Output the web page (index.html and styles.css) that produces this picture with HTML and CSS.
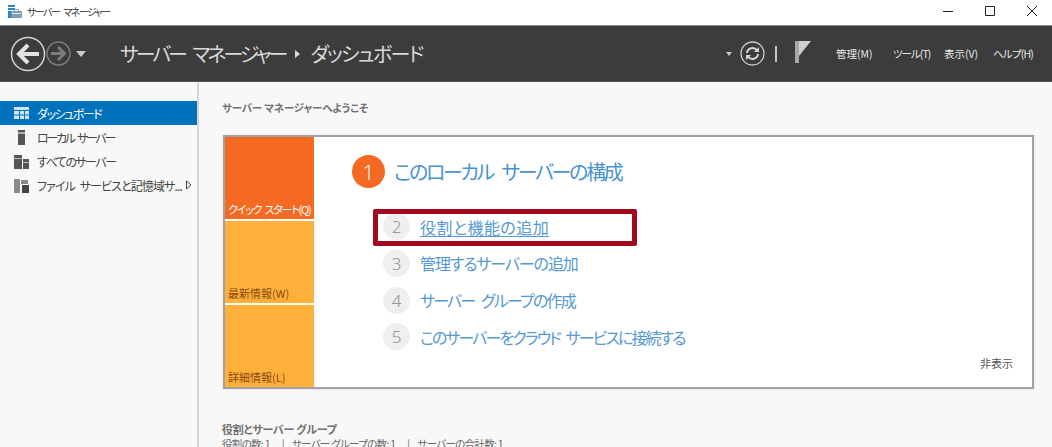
FILE: index.html
```html
<!DOCTYPE html>
<html lang="ja">
<head>
<meta charset="utf-8">
<title>サーバー マネージャー</title>
<link rel="stylesheet" href="styles.css">
</head>
<body>
<div class="app">
  <div class="titlebar">
    <svg class="app-icon" width="14" height="13" viewBox="0 0 14 13"><path fill="#2a86d0" d="M0 0h7v2H0zM0 3h7v2H0zM0 6h3v7H0z"/><path fill="#7f9db5" d="M3 6h11v7H3z"/><path fill="#dfe8ef" d="M4 8h9v1H4z"/><path fill="none" stroke="#7f9db5" d="M6.500 6V4.500h4V6"/></svg>
    <span class="app-name">サーバー マネージャー</span>
    <div class="win-buttons">
      <svg width="10" height="10" viewBox="0 0 10 10"><path stroke="#222" d="M0 5.500h10"/></svg>
      <svg width="10" height="10" viewBox="0 0 10 10"><path fill="none" stroke="#222" d="M.5.500h9v9h-9z"/></svg>
      <svg width="10" height="10" viewBox="0 0 10 10"><path stroke="#222" d="M0 0l10 10M10 0L0 10"/></svg>
    </div>
  </div>
  <header class="toolbar">
    <svg class="nav-back" width="36" height="36" viewBox="0 0 36 36"><circle cx="18" cy="18" r="16.5" fill="none" stroke="#d4d4d4" stroke-width="1.500"/><path fill="none" stroke="#e2e2e2" stroke-width="4" d="M29 18H10M18 9l-9 9 9 9"/></svg>
    <svg class="nav-forward" width="25" height="25" viewBox="0 0 25 25"><circle cx="12.5" cy="12.5" r="11.5" fill="none" stroke="#7c7c7c" stroke-width="1.500"/><path fill="none" stroke="#7c7c7c" stroke-width="3" d="M5 12.5h13M12 6l6.500 6.500L12 19"/></svg>
    <span class="caret"></span>
    <div class="crumbs"><span class="crumb-root">サーバー マネージャー</span><span class="crumb-sep"></span><span class="crumb-page">ダッシュボード</span></div>
    <span class="caret caret-small"></span>
    <svg class="refresh" width="25" height="25" viewBox="0 0 25 25"><circle cx="12.5" cy="12.5" r="11.5" fill="none" stroke="#d0d0d0" stroke-width="1.300"/><path fill="none" stroke="#d8d8d8" stroke-width="2" d="M7 12a5.500 5.500 0 0 1 10-2.500M18 13a5.500 5.500 0 0 1-10 2.500"/><path fill="#d8d8d8" d="M19 6v5h-5zM6 19v-5h5z"/></svg>
    <span class="divider"></span>
    <svg class="flag" width="16" height="22" viewBox="0 0 16 22"><path fill="#a8a8a8" d="M0 0h4v22H0z"/><path fill="#cfcfcf" d="M4 0h12L4 15z"/></svg>
    <nav class="menu"><span>管理(M)</span><span class="menu-tools">ツール(T)</span><span>表示(V)</span><span class="menu-help">ヘルプ(H)</span></nav>
  </header>
  <div class="body">
    <aside class="sidebar">
      <div class="nav-item active">
        <svg width="15" height="12" viewBox="0 0 15 12"><path fill="#cfe3f3" d="M0 0h15v12H0z"/><path fill="#0b72bd" d="M0 3h15v1H0zM0 7.500h15v1H0zM5 3h1v9H5zM10 3h1v9h-1z"/></svg>
        <span class="nav-dash">ダッシュボード</span>
      </div>
      <div class="nav-item">
        <svg width="15" height="16" viewBox="0 0 15 16"><path fill="#555" d="M4 1h7v15H4z"/><path fill="#aaa" d="M4 3h7v2H4z"/></svg>
        <span class="nav-local">ローカル サーバー</span>
      </div>
      <div class="nav-item">
        <svg width="15" height="15" viewBox="0 0 15 15"><path fill="#555" d="M0 1h8v14H0zM9 5h6v10H9z"/><path fill="#bbb" d="M0 4h8v1H0zM9 8h6v1H9z"/></svg>
        <span class="nav-all">すべてのサーバー</span>
      </div>
      <div class="nav-item">
        <svg width="15" height="15" viewBox="0 0 15 15"><path fill="#8a8a8a" d="M0 1h6v14H0zM7 2h7v4H7z"/><path fill="#444" d="M8 7h7v8H8z"/></svg>
        <span class="nav-files">ファイル サービスと記憶域サ...</span>
        <svg class="nav-arrow" width="6" height="10" viewBox="0 0 6 10"><path fill="none" stroke="#444" d="M.5 1v8L5 5z"/></svg>
      </div>
    </aside>
    <main class="content">
      <h2 class="welcome">サーバー マネージャーへようこそ</h2>
      <section class="card">
        <div class="tiles">
          <div class="tile tile-on">クイック スタート(Q)</div>
          <div class="tile">最新情報(W)</div>
          <div class="tile">詳細情報(L)</div>
        </div>
        <div class="steps">
          <div class="step-head"><span class="badge badge-on">1</span><span class="head-text">このローカル サーバーの構成</span></div>
          <div class="step first"><span class="badge">2</span><a class="step-link link-roles">役割と機能の追加</a></div>
          <div class="step"><span class="badge">3</span><a class="step-link link-manage">管理するサーバーの追加</a></div>
          <div class="step"><span class="badge">4</span><a class="step-link link-group">サーバー グループの作成</a></div>
          <div class="step"><span class="badge">5</span><a class="step-link link-cloud">このサーバーをクラウド サービスに接続する</a></div>
          <div class="hide">非表示</div>
        </div>
        <div class="highlight"></div>
      </section>
      <h3 class="roles">役割とサーバー グループ</h3>
      <p class="roles-sub"><span>役割の数: 1</span><i>|</i><span>サーバー グループの数: 1</span><i>|</i><span>サーバーの合計数: 1</span></p>
    </main>
  </div>
</div>
</body>
</html>
```
FILE: styles.css
```css
* { box-sizing: border-box; }
html, body { margin: 0; height: 100%; overflow: hidden; }
body { font-family: "Noto Sans CJK JP", "Noto Sans", sans-serif; font-feature-settings: "palt"; background: #f8f8f8; color: #555; }
.app { width: 1052px; height: 447px; display: flex; flex-direction: column; overflow: hidden; }

.titlebar { height: 25px; flex: none; background: #fff; display: flex; align-items: center; padding: 0 0 3px 8px; }
.app-icon { flex: none; margin-right: 5px; }
.app-name { font-size: 10px; color: #333; letter-spacing: -1.500px; word-spacing: 3px; }
.win-buttons { margin-left: auto; display: flex; gap: 32px; padding-right: 15px; }

.toolbar { height: 57px; flex: none; background: #3c3c3c; border-top: 1px solid #8a8a8a; border-bottom: 1px solid #555; display: flex; align-items: center; padding-left: 10px; color: #e0e0e0; }
.nav-back { flex: none; }
.nav-forward { flex: none; }
.caret { flex: none; width: 0; height: 0; border-left: 5px solid transparent; border-right: 5px solid transparent; border-top: 6px solid #ccc; margin-left: 5px; }
.caret-small { border-left-width: 3px; border-right-width: 3px; border-top-width: 4px; margin-left: 0; }
.crumbs { display: flex; align-items: center; margin-left: 34px; font-size: 20px; color: #d8d8d8; width: 606px; white-space: nowrap; }
.crumb-root { letter-spacing: -3px; word-spacing: 6px; }
.crumb-page { letter-spacing: -1.700px; }
.crumb-sep { width: 0; height: 0; margin: 0 10px 0 10px; border-top: 4px solid transparent; border-bottom: 4px solid transparent; border-left: 5px solid #ddd; }
.refresh { flex: none; margin-left: 8px; }
.divider { flex: none; width: 2px; height: 16px; background: #c4c4c4; margin-left: 10px; }
.flag { flex: none; margin: 0 0 3px 18px; }
.menu { display: flex; margin-left: 25px; font-size: 10.500px; color: #e8e8e8; white-space: nowrap; }
.menu span:nth-child(1) { width: 57px; }
.menu span:nth-child(2) { width: 51px; }
.menu span:nth-child(3) { width: 49px; }
.menu .menu-tools { letter-spacing: -1px; }
.menu .menu-help { letter-spacing: -.800px; }

.body { flex: 1; display: flex; min-height: 0; }
.sidebar { width: 199px; flex: none; border-right: 2px solid #d6d6d6; padding-top: 19px; background: #f8f8f8; }
.nav-item { height: 24px; display: flex; align-items: center; padding-left: 14px; font-size: 12px; color: #444; white-space: nowrap; }
.nav-item svg { flex: none; margin-right: 8px; }
.nav-item .nav-arrow { margin: 0 0 0 4px; }
.nav-item.active { background: #0072bc; color: #fff; }
.nav-dash { letter-spacing: -1.500px; }
.nav-local { letter-spacing: -2.300px; word-spacing: 3px; }
.nav-all { letter-spacing: -1.500px; }
.nav-files { letter-spacing: -.900px; word-spacing: 3px; }

.content { flex: 1; min-width: 0; padding: 19px 18px 0 24px; }
.welcome { margin: 0 0 20px -1px; font-size: 10.500px; line-height: 14px; font-weight: 700; color: #707070; letter-spacing: -.150px; }
.card { position: relative; width: 811px; height: 254px; background: #fff; border: 2px solid #a2a2a2; display: flex; box-shadow: 0 0 3px #ddd; }
.tiles { width: 89px; flex: none; display: flex; flex-direction: column; gap: 2px; }
.tile { flex: 1; background: #ffb03b; color: #8b4a10; font-size: 11px; line-height: 14px; display: flex; align-items: flex-end; padding: 0 0 3px 3px; white-space: nowrap; }
.tile-on { background: #f56a22; color: #fff; letter-spacing: -1.200px; word-spacing: 2px; }
.steps { flex: 1; position: relative; padding: 18px 0 0 38px; }
.step-head { display: flex; align-items: center; height: 33px; }
.badge { width: 27px; height: 27px; flex: none; border-radius: 50%; background: #efefef; color: #888; font-size: 17px; display: flex; align-items: center; justify-content: center; font-family: "Open Sans", sans-serif; font-weight: 300; }
.badge-on { width: 33px; height: 33px; background: #f56a22; color: #fff; font-size: 21px; }
.head-text { margin-left: 9px; font-size: 20px; color: #4a93d3; white-space: nowrap; letter-spacing: -2.300px; word-spacing: 6px; }
.step { display: flex; align-items: center; height: 27px; margin-top: 9.800px; margin-left: 31px; }
.step.first { margin-top: 25px; }
.step-link { margin-left: 10px; font-size: 16px; color: #5598d4; white-space: nowrap; }
.link-roles { letter-spacing: .450px; text-decoration: underline; text-underline-offset: 2px; }
.link-manage { letter-spacing: -1.100px; }
.link-group { letter-spacing: -1.800px; word-spacing: 5px; }
.link-cloud { letter-spacing: -1.900px; word-spacing: 4px; }
.hide { position: absolute; right: 19px; bottom: 17px; font-size: 11px; line-height: 14px; color: #555; }
.highlight { position: absolute; left: 148px; top: 72px; width: 264px; height: 37px; border: 5px solid #a00a1c; border-radius: 2px; pointer-events: none; }

.roles { margin: 33px 0 0 -1px; font-size: 11px; line-height: 15px; font-weight: 700; color: #707070; letter-spacing: -.250px; }
.roles-sub { margin: 0 0 0 -1px; font-size: 10.500px; line-height: 14px; color: #666; white-space: nowrap; display: flex; letter-spacing: -.700px; }
.roles-sub i { font-style: normal; margin: 0 8px 0 12px; }
```
